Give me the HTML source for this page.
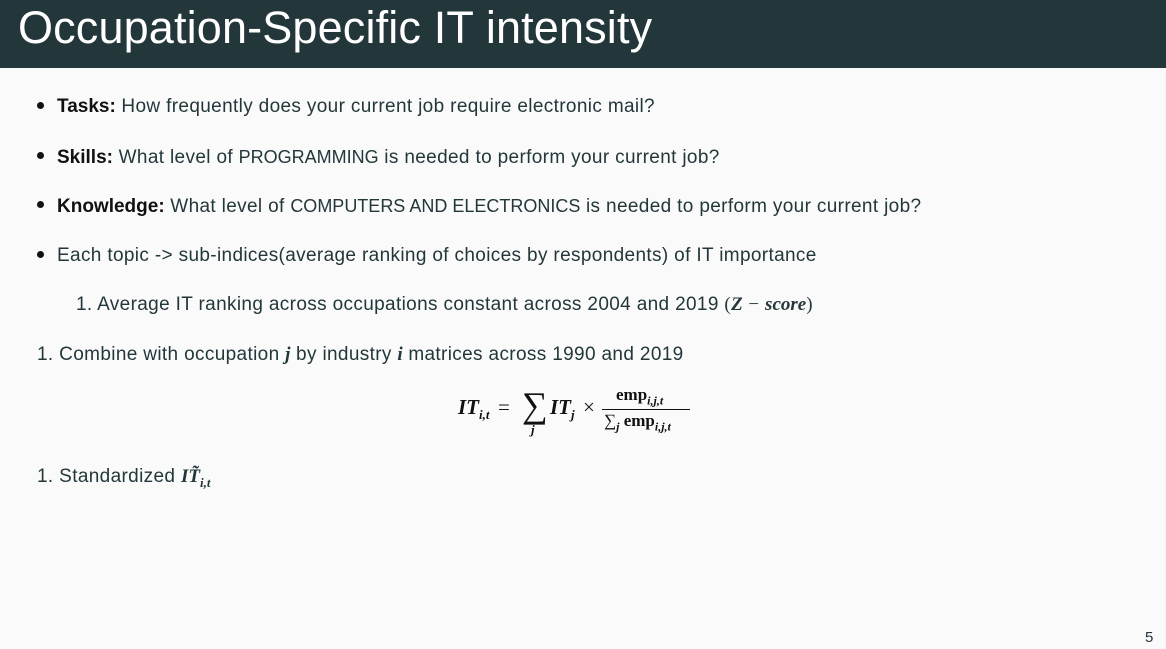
<!DOCTYPE html>
<html><head><meta charset="utf-8"><style>
body{margin:0;width:1166px;height:649px;background:#fafafa;position:relative;overflow:hidden;font-family:"Liberation Sans",sans-serif;color:#23373b}
.hdr{position:absolute;left:0;top:0;width:1166px;height:68px;background:#23373b}
.hdr div{position:absolute;left:18px;top:2px;color:#fff;font-size:45px;line-height:52px;letter-spacing:0.15px}
.l{position:absolute;font-size:19px;line-height:22px;white-space:nowrap;letter-spacing:0.35px}
.c{font-size:18px;letter-spacing:0}
.b{position:absolute;width:7px;height:7px;border-radius:50%;background:#111}
.m{font-family:"Liberation Serif",serif;font-style:italic;font-weight:bold;font-size:19px;letter-spacing:0}
.r{font-family:"Liberation Serif",serif}
</style></head><body>
<div class="hdr"><div>Occupation-Specific IT intensity</div></div>
<div class="b" style="left:37px;top:102px"></div>
<div class="l" style="left:57px;top:96px"><b style="color:#111;letter-spacing:0">Tasks:</b> How frequently does your current job require electronic mail?</div>
<div class="b" style="left:37px;top:152px"></div>
<div class="l" style="left:57px;top:146px"><b style="color:#111;letter-spacing:0">Skills:</b> What level of <span class="c">PROGRAMMING</span> is needed to perform your current job?</div>
<div class="b" style="left:37px;top:201px"></div>
<div class="l" style="left:57px;top:195px"><b style="color:#111;letter-spacing:0">Knowledge:</b> What level of <span class="c">COMPUTERS AND ELECTRONICS</span> is needed to perform your current job?</div>
<div class="b" style="left:37px;top:251px"></div>
<div class="l" style="left:57px;top:245px">Each topic -&gt; sub-indices(average ranking of choices by respondents) of IT importance</div>
<div class="l" style="left:76px;top:294px">1. Average IT ranking across occupations constant across 2004 and 2019 <span class="r">(</span><span class="m">Z</span> <span class="r">−</span> <span class="m">score</span><span class="r">)</span></div>
<div class="l" style="left:37px;top:344px">1. Combine with occupation <span class="m">j</span> by industry <span class="m">i</span> matrices across 1990 and 2019</div>
<div style="position:absolute;left:458px;top:384px;font-family:'Liberation Serif',serif;font-size:21px;color:#111;white-space:nowrap">
<span style="position:absolute;left:0;top:11px"><i><b>IT</b></i><sub style="font-size:13px"><i><b>i,t</b></i></sub></span>
<span style="position:absolute;left:40px;top:11px">=</span>
<span style="position:absolute;left:64px;top:0px;font-size:36px">∑</span>
<span style="position:absolute;left:73px;top:38px;font-size:13px"><i><b>j</b></i></span>
<span style="position:absolute;left:92px;top:11px"><i><b>IT</b></i><sub style="font-size:13px"><i><b>j</b></i></sub></span>
<span style="position:absolute;left:125px;top:11px">×</span>
<span style="position:absolute;left:158px;top:1px;font-size:17px"><b>emp</b><sub style="font-size:12px"><i><b>i,j,t</b></i></sub></span>
<span style="position:absolute;left:144px;top:25px;width:88px;height:1px;background:#111"></span>
<span style="position:absolute;left:146px;top:27px;font-size:17px">∑<sub style="font-size:12px"><i><b>j</b></i></sub> <b>emp</b><sub style="font-size:12px"><i><b>i,j,t</b></i></sub></span>
</div>
<div class="l" style="left:37px;top:466px">1. Standardized <span class="m">IT̃</span><sub style="font-size:13px" class="m">i,t</sub></div>
<div class="l" style="left:1145px;top:627px;font-size:15px">5</div>
</body></html>
